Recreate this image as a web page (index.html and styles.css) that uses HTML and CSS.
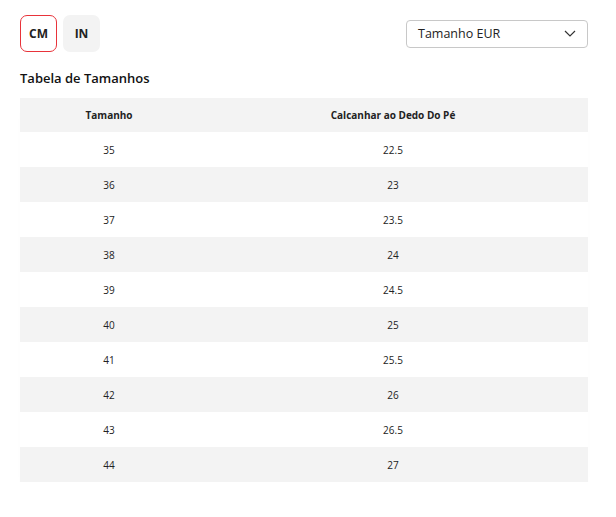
FILE: index.html
```html
<!DOCTYPE html>
<html lang="pt">
<head>
<meta charset="utf-8">
<link rel="stylesheet" href="styles.css">
</head>
<body>
<div class="panel">
  <div class="toolbar">
    <div class="units">
      <button class="unit active">CM</button>
      <button class="unit">IN</button>
    </div>
    <div class="select">
      <span>Tamanho EUR</span>
      <svg class="chev" width="12" height="7" viewBox="0 0 12 7"><path d="M1 1l5 5 5-5" fill="none" stroke="#333" stroke-width="1.2"/></svg>
    </div>
  </div>
  <h2 class="title">Tabela de Tamanhos</h2>
  <table class="sizes">
    <thead>
      <tr><th class="c1">Tamanho</th><th>Calcanhar ao Dedo Do Pé</th></tr>
    </thead>
    <tbody>
      <tr><td>35</td><td>22.5</td></tr>
      <tr><td>36</td><td>23</td></tr>
      <tr><td>37</td><td>23.5</td></tr>
      <tr><td>38</td><td>24</td></tr>
      <tr><td>39</td><td>24.5</td></tr>
      <tr><td>40</td><td>25</td></tr>
      <tr><td>41</td><td>25.5</td></tr>
      <tr><td>42</td><td>26</td></tr>
      <tr><td>43</td><td>26.5</td></tr>
      <tr><td>44</td><td>27</td></tr>
    </tbody>
  </table>
</div>
</body>
</html>
```
FILE: styles.css
```css
html, body {
  margin: 0;
  background: #fff;
  font-family: "Open Sans", "Noto Sans", sans-serif;
  color: #222;
}
.panel {
  padding: 15px 28px 0 20px;
}
.toolbar {
  display: flex;
  justify-content: space-between;
  align-items: center;
}
.units {
  display: flex;
  gap: 6px;
}
.unit {
  width: 37px;
  height: 37px;
  border: 1px solid transparent;
  border-radius: 7px;
  background: #f3f3f3;
  font-family: inherit;
  font-size: 12px;
  font-weight: 700;
  color: #222;
  padding: 0;
}
.unit.active {
  background: #fff;
  border-color: #e8333a;
}
.select {
  width: 182px;
  height: 28px;
  box-sizing: border-box;
  border: 1px solid #c8c8c8;
  border-radius: 4px;
  display: flex;
  align-items: center;
  justify-content: space-between;
  padding: 0 11px 0 11px;
  font-size: 12.5px;
  color: #222;
}
.chev {
  display: block;
}
.title {
  margin: 17px 0 10px;
  font-size: 13px;
  line-height: 19px;
  font-weight: 600;
  color: #111;
}
.sizes {
  width: 568px;
  border-collapse: collapse;
  font-size: 10px;
  box-shadow: 0 8px 10px -6px rgba(0,0,0,0.06);
}
.sizes th, .sizes td {
  text-align: center;
  padding: 0;
}
.sizes th {
  height: 34px;
  font-weight: 700;
  background: #f3f3f3;
}
.sizes .c1 {
  width: 178px;
}
.sizes td {
  height: 35px;
}
.sizes tbody tr:nth-child(even) td {
  background: #f3f3f3;
}
```
